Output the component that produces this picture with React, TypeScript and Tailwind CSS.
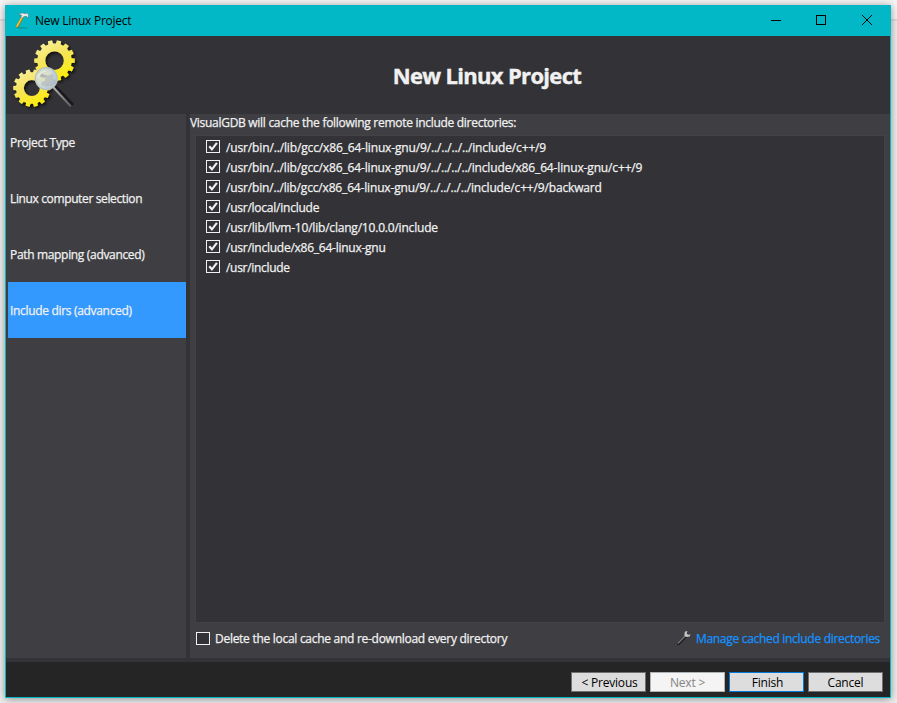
import React from "react";

const directories = [
  { path: "/usr/bin/../lib/gcc/x86_64-linux-gnu/9/../../../../include/c++/9", tracking: "tracking-[-0.14px]" },
  { path: "/usr/bin/../lib/gcc/x86_64-linux-gnu/9/../../../../include/x86_64-linux-gnu/c++/9", tracking: "tracking-[-0.15px]" },
  { path: "/usr/bin/../lib/gcc/x86_64-linux-gnu/9/../../../../include/c++/9/backward", tracking: "tracking-[-0.165px]" },
  { path: "/usr/local/include", tracking: "tracking-[-0.24px]" },
  { path: "/usr/lib/llvm-10/lib/clang/10.0.0/include", tracking: "tracking-[-0.2px]" },
  { path: "/usr/include/x86_64-linux-gnu", tracking: "tracking-[-0.25px]" },
  { path: "/usr/include", tracking: "tracking-[-0.3px]" },
];

const steps = [
  { label: "Project Type", tracking: "tracking-[-0.33px]" },
  { label: "Linux computer selection", tracking: "tracking-[-0.37px]" },
  { label: "Path mapping (advanced)", tracking: "tracking-[-0.33px]" },
  { label: "Include dirs (advanced)", tracking: "tracking-[-0.32px]", active: true },
];

function gearPath(cx: number, cy: number, outer: number, root: number, hole: number, teeth: number, phase: number) {
  const step = (Math.PI * 2) / teeth;
  const pt = (r: number, a: number) => `${(cx + r * Math.cos(a)).toFixed(2)} ${(cy + r * Math.sin(a)).toFixed(2)}`;
  let d = "";
  for (let i = 0; i < teeth; i++) {
    const a = phase + i * step;
    d += `${i === 0 ? "M" : "L"}${pt(root, a - step * 0.32)}L${pt(outer, a - step * 0.24)}L${pt(outer, a + step * 0.24)}L${pt(root, a + step * 0.32)}`;
  }
  return `${d}ZM${cx - hole} ${cy}a${hole} ${hole} 0 1 0 ${hole * 2} 0a${hole} ${hole} 0 1 0 ${-hole * 2} 0Z`;
}

function GearsLogo() {
  return (
    <svg width="80" height="78" viewBox="0 0 80 78" className="block">
      <defs>
        <linearGradient id="gold" x1="0" y1="0" x2="0.5" y2="1">
          <stop offset="0" stopColor="#fbf3ac" />
          <stop offset="0.5" stopColor="#f4e45e" />
          <stop offset="1" stopColor="#fbec10" />
        </linearGradient>
        <radialGradient id="lens" cx="0.4" cy="0.45" r="0.62">
          <stop offset="0" stopColor="#e3e4b8" />
          <stop offset="0.6" stopColor="#d3dcd2" />
          <stop offset="1" stopColor="#a9bfd6" />
        </radialGradient>
        <linearGradient id="handle" gradientUnits="userSpaceOnUse" x1="47" y1="50" x2="66" y2="70">
          <stop offset="0" stopColor="#b5b5b5" />
          <stop offset="1" stopColor="#5a5a5c" />
        </linearGradient>
        <filter id="shade" x="-20%" y="-20%" width="150%" height="150%">
          <feDropShadow dx="1.8" dy="2" stdDeviation="1.6" floodColor="#000" floodOpacity="0.7" />
        </filter>
      </defs>
      <g filter="url(#shade)" fillRule="evenodd" fill="url(#gold)">
        <path d={gearPath(48.5, 24.6, 20.4, 17.2, 9.3, 14, 0)} />
        <path d={gearPath(25.8, 52.1, 18.7, 15.8, 8, 14, 0)} />
      </g>
      <path d="M48.300 50.500 66.500 69.500" stroke="#19191b" strokeWidth="4.500" />
      <path d="M47 51 65 70.500" stroke="url(#handle)" strokeWidth="2" />
      <circle cx="40.300" cy="42.600" r="11" fill="url(#lens)" stroke="#b8c2c2" strokeWidth="1.200" />
      <path d="M39 42.500l4-3.500 3-1 2 2-1 3 3 1-1 4-4 2-5 1-5-2 1-3 3-1z" fill="#a9b0c0" opacity="0.6" />
      <path d="M34 39l3-1.500 1.500 1.500 3 .3-1 2-3 .5-3-1z" fill="#a0a7b8" opacity="0.7" />
      <path d="M32 42a8.500 8.500 0 0 1 8-7" stroke="#eef1e4" strokeWidth="1.500" fill="none" opacity="0.7" />
    </svg>
  );
}

function HammerIcon() {
  return (
    <svg width="18" height="18" viewBox="0 0 18 18" className="block">
      <path d="M4 15.800h10" stroke="#078c97" strokeWidth="1.500" opacity="0.7" />
      <path d="M9.300 5.500 4.400 14.400" stroke="#a8740c" strokeWidth="2.400" strokeLinecap="round" />
      <path d="M9 5.500 4 14.200" stroke="#ffc52e" strokeWidth="1.500" strokeLinecap="round" />
      <path d="M5.500 2.600C7.500.8 9.500.6 12 1.800l2-.8 1.600 2-.4 3-1.700-1.700-2.500.2-1.500 1.400-1.600-1.200.8-1.400c-1.300-.7-2.200-.8-3.200-.7z" fill="#ececec" stroke="#59646a" strokeWidth="0.500" />
    </svg>
  );
}

function WrenchIcon() {
  return (
    <svg width="14" height="14" viewBox="0 0 14 14" className="block">
      <path d="M1.400 12.600 8.500 5.400" stroke="#1d1d1f" strokeWidth="3" strokeLinecap="round" />
      <path d="M1.200 12 8.500 4.600" stroke="#747474" strokeWidth="1.600" strokeLinecap="round" strokeDasharray="2.500 0.600" />
      <path d="M10.600-.2 7.800.8 7.300 4.400l1.900 1.700 3.400-.7.900-2-2.500.3-1.400-1.500z" fill="#c4c4c4" />
    </svg>
  );
}

function CheckBox({ checked = false }: { checked?: boolean }) {
  return (
    <span className="flex h-[13px] w-[14px] shrink-0 items-center justify-center border border-[#f1f1f1] bg-[#333337]">
      {checked && (
        <svg width="12" height="11" viewBox="0 0 12 11" className="block">
          <path d="M2.300 5.300 4.900 8.300 9.900 1.800" stroke="#f1f1f1" strokeWidth="2.100" fill="none" />
        </svg>
      )}
    </span>
  );
}

function FooterButton({ label, className }: { label: string; className: string }) {
  return (
    <button className={`flex h-5 w-[75px] items-center justify-center border pt-[2px] text-xs leading-4 ${className}`}>
      <span className="whitespace-nowrap tracking-[-0.2px]">{label}</span>
    </button>
  );
}

export default function App() {
  return (
    <div className="h-[703px] w-[897px] overflow-hidden bg-[linear-gradient(#f4f4f4_0,#f4f4f4_19px,#dcdcdc_19px,#dcdcdc_21px,#ececec_21px)] p-[5px] pr-[6px] font-['Open_Sans','Noto_Sans',sans-serif] text-xs text-[#f1f1f1]">
      <div className="flex h-[693px] w-[886px] flex-col border border-[#02b8c6] bg-[#333337] shadow-[0_1px_8px_rgba(0,0,0,0.4)]">
        <header className="flex h-[30px] shrink-0 items-center bg-[#02b8c6] text-black">
          <div className="ml-[7px]"><HammerIcon /></div>
          <span className="ml-1 whitespace-nowrap tracking-[-0.26px]">New Linux Project</span>
          <div className="ml-auto flex h-full items-center">
            <svg width="138" height="30" viewBox="0 0 138 30" className="block" shapeRendering="crispEdges" fill="none" stroke="#000">
              <path d="M19 14.500h10" />
              <rect x="64.500" y="9.500" width="9" height="9" />
              <path d="M110 9l10 10M120 9l-10 10" shapeRendering="auto" />
            </svg>
          </div>
        </header>

        <div className="flex h-[78px] shrink-0">
          <div className="w-20"><GearsLogo /></div>
          <h1 className="flex flex-1 items-center justify-center pr-[2px] pt-[2px] text-[22px] font-bold tracking-[-0.68px] [-webkit-text-stroke:0.4px_#f1f1f1]">
            <span className="whitespace-nowrap">New Linux Project</span>
          </h1>
        </div>

        <div className="flex h-[544px] shrink-0 gap-1 [-webkit-text-stroke:0.25px]">
          <nav className="w-[180px] bg-[#3f3f43] pl-[2px]">
            {steps.map((s) => (
              <div key={s.label} className={`flex h-14 items-center pl-[2px] pt-[2px] ${s.active ? "bg-[#3399ff]" : ""}`}>
                <span className={`whitespace-nowrap ${s.tracking}`}>{s.label}</span>
              </div>
            ))}
          </nav>

          <main className="flex flex-1 flex-col bg-[#3f3f43]">
            <p className="h-[21px] whitespace-nowrap leading-[18px] tracking-[-0.29px]">VisualGDB will cache the following remote include directories:</p>
            <ul className="ml-[5px] mr-[5px] h-[488px] border border-[#434346] bg-[#333337] pl-[10px] pt-[1px]">
              {directories.map((d) => (
                <li key={d.path} className="flex h-5 items-start gap-[6px] pt-[3px]">
                  <CheckBox checked />
                  <span className={`whitespace-nowrap leading-4 ${d.tracking}`}>{d.path}</span>
                </li>
              ))}
            </ul>
            <div className="flex h-8 items-center pl-[6px] pr-[10px]">
              <div className="pb-[2px]"><CheckBox /></div>
              <span className="ml-[5px] whitespace-nowrap tracking-[-0.28px]">Delete the local cache and re-download every directory</span>
              <a className="ml-auto flex items-center gap-[5px] text-[#1492ff]">
                <div className="pb-[2px]"><WrenchIcon /></div>
                <span className="whitespace-nowrap tracking-[-0.3px]">Manage cached include directories</span>
              </a>
            </div>
          </main>
        </div>

        <footer className="mt-1 flex flex-1 items-start justify-end gap-1 bg-[#252526] pr-[7px] pt-[10px] text-black">
          <FooterButton label="&lt; Previous" className="border-[#707070] bg-[#dddddd] pl-[2px]" />
          <FooterButton label="Next &gt;" className="border-[#adb2b5] bg-[#f4f4f4] text-[#838383]" />
          <FooterButton label="Finish" className="border-[#0078d7] bg-[#dddddd] pl-[2px]" />
          <FooterButton label="Cancel" className="border-[#707070] bg-[#dddddd]" />
        </footer>
      </div>
    </div>
  );
}
